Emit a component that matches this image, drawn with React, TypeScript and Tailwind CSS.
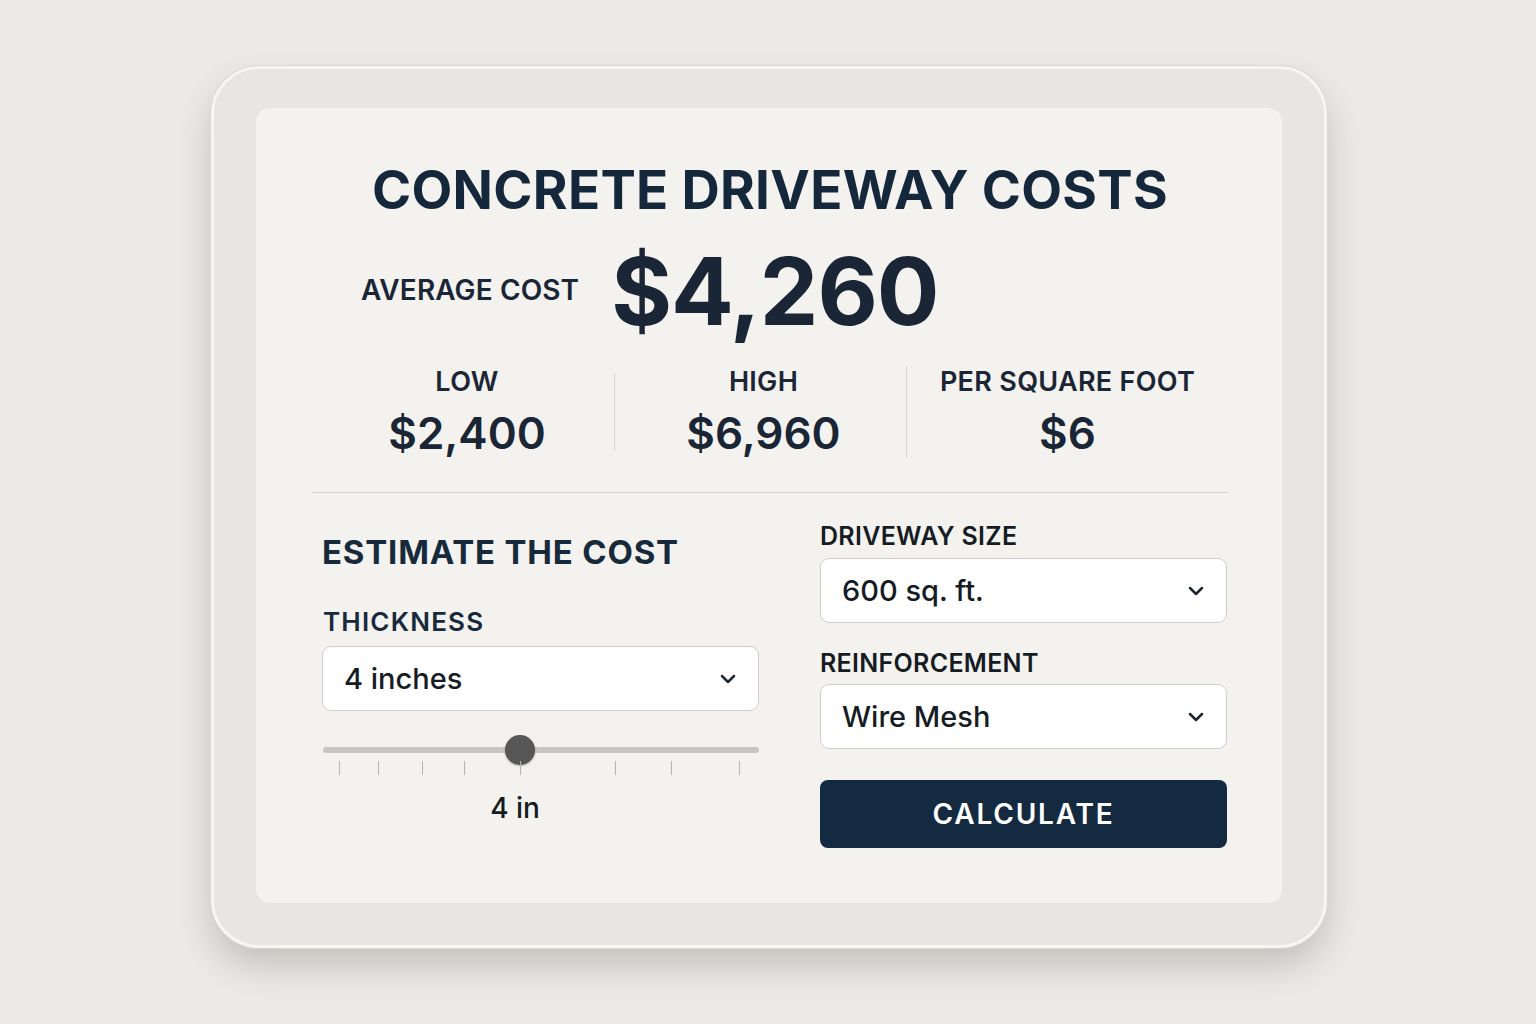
import { ChevronDown } from "lucide-react"

const ticks = [17, 56, 100, 142, 198, 293, 349, 417]

function Select({ value }: { value: string }) {
  return (
    <div className="flex items-center justify-between h-[65px] bg-white border border-[#cfcecb] rounded-[9px] pl-[21px] pr-[18px]">
      <span className="text-[29px] font-medium text-[#151c24] leading-none">{value}</span>
      <ChevronDown className="w-[24px] h-[24px] text-[#1d2530]" strokeWidth={2.5} />
    </div>
  )
}

function Stat({ label, value }: { label: string; value: string }) {
  return (
    <div className="flex flex-col items-center">
      <span className="text-[27px] leading-[32px] font-semibold tracking-[0.3px] text-[#1a2636]">{label}</span>
      <span className="mt-[10px] text-[44px] leading-[50px] font-semibold text-[#1a2636]">{value}</span>
    </div>
  )
}

export default function App() {
  return (
    <div
      className="min-h-screen w-full bg-[#ebeae7] flex justify-center pt-[66px]"
      style={{ fontFamily: "Inter, Roboto, 'Liberation Sans', sans-serif" }}
    >
      <div className="w-[1116px] h-[882px] ml-[2px] rounded-[48px] bg-[#e7e6e3] border-[3px] border-[#f7f6f3] shadow-[0_0_0_1px_#d9d7d2,0_18px_34px_rgba(60,55,45,0.22)] px-[42px] pt-[39px] pb-[42px]">
        <div className="h-full rounded-[14px] bg-[#f3f2ef] pt-[54px] pl-[56px] pr-[54px]">
          {/* Title */}
          <h1 className="text-center text-[53px] leading-[56px] font-bold tracking-[0.3px] text-[#15283b]">
            CONCRETE DRIVEWAY COSTS
          </h1>

          {/* Average */}
          <div className="mt-[23px] flex items-center pl-[49px]">
            <span className="text-[28px] font-semibold tracking-[0.1px] text-[#1a2636] -mt-[3px]">AVERAGE COST</span>
            <span className="ml-[32px] text-[93px] leading-[100px] font-bold tracking-[-1px] text-[#1a2636]">$4,260</span>
          </div>

          {/* Stats */}
          <div className="mt-[25px] flex items-stretch">
            <div className="w-[302px] flex justify-center pl-[8px]">
              <Stat label="LOW" value="$2,400" />
            </div>
            <div className="w-px bg-[#d8d6d2] my-[7px]" />
            <div className="w-[291px] flex justify-center pl-[6px]">
              <Stat label="HIGH" value="$6,960" />
            </div>
            <div className="w-px bg-[#d8d6d2]" />
            <div className="flex-1 flex justify-center">
              <Stat label="PER SQUARE FOOT" value="$6" />
            </div>
          </div>

          <div className="mt-[34px] h-px bg-[#d6d4cf]" />

          {/* Estimate */}
          <div className="flex pl-[10px] pr-0">
            <div className="w-[437px] pt-[41px]">
              <h2 className="text-[33px] leading-[36px] font-bold tracking-[0.8px] text-[#172a3c]">ESTIMATE THE COST</h2>
              <div className="mt-[37px] text-[26px] leading-[30px] font-semibold tracking-[1.2px] text-[#172a3c] pl-[1px]">
                THICKNESS
              </div>
              <div className="mt-[9px]">
                <Select value="4 inches" />
              </div>
              <div className="relative mt-[24px] h-[45px]">
                <div className="absolute left-[1px] right-0 top-[12px] h-[6px] rounded-full bg-[#c6c5c2]" />
                <div className="absolute left-[183px] top-0 w-[30px] h-[30px] rounded-full bg-[#575757] shadow-[0_1px_2px_rgba(0,0,0,0.3)]" />
                {ticks.map((t) => (
                  <div key={t} className="absolute top-[26px] w-px h-[14px] bg-[#b5b4b1]" style={{ left: t }} />
                ))}
              </div>
              <div className="mt-[12px] w-[386px] text-center text-[28px] leading-[32px] font-medium text-[#151c24]">4 in</div>
            </div>

            <div className="ml-[61px] w-[407px] pt-[28px]">
              <div className="text-[25px] leading-[30px] font-semibold tracking-[0.3px] text-[#151c24]">DRIVEWAY SIZE</div>
              <div className="mt-[7px]">
                <Select value="600 sq. ft." />
              </div>
              <div className="mt-[25px] text-[25px] leading-[30px] font-semibold tracking-[0.3px] text-[#151c24]">REINFORCEMENT</div>
              <div className="mt-[6px]">
                <Select value="Wire Mesh" />
              </div>
              <button className="mt-[31px] w-full h-[68px] rounded-[8px] bg-[#132a40] text-white text-[28px] font-semibold tracking-[1.8px]">
                CALCULATE
              </button>
            </div>
          </div>
        </div>
      </div>
    </div>
  )
}
